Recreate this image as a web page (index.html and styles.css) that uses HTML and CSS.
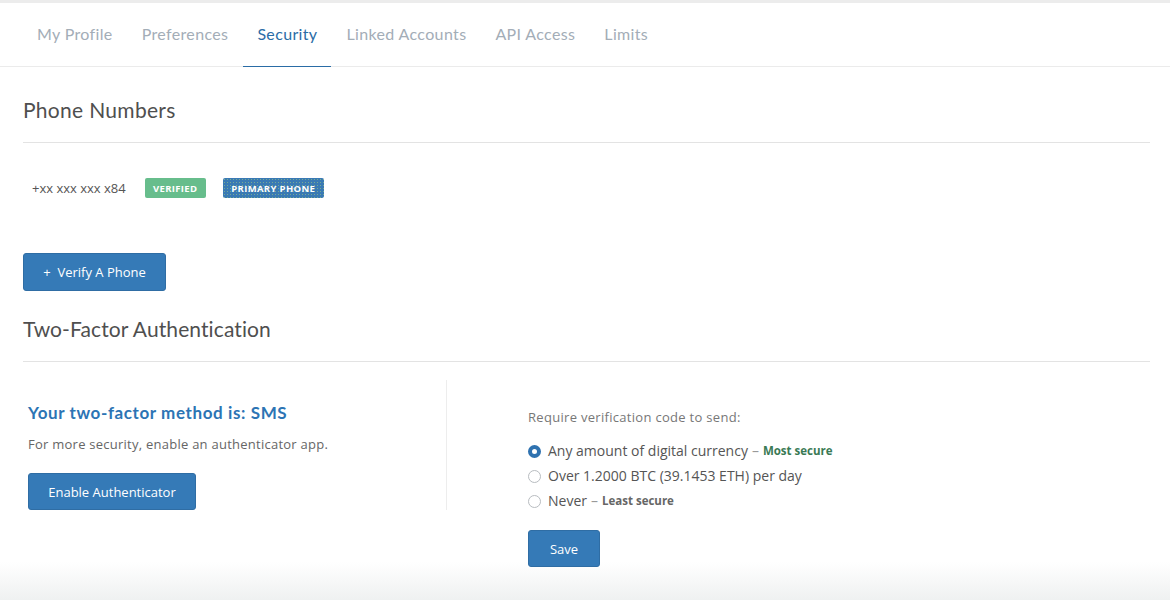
FILE: index.html
```html
<!DOCTYPE html>
<html>
<head>
<meta charset="utf-8">
<link rel="stylesheet" href="styles.css">
</head>
<body>
<div class="page">
  <nav class="tabs">
    <a class="tab">My Profile</a>
    <a class="tab">Preferences</a>
    <a class="tab active">Security</a>
    <a class="tab">Linked Accounts</a>
    <a class="tab">API Access</a>
    <a class="tab">Limits</a>
  </nav>
  <main class="content">
    <h2 class="section-title">Phone Numbers</h2>
    <div class="phone-row">
      <span class="phone">+xx xxx xxx x84</span>
      <span class="badge badge-green">VERIFIED</span>
      <span class="badge badge-blue">PRIMARY PHONE</span>
    </div>
    <button class="btn btn-verify">+ &nbsp;Verify A Phone</button>
    <h2 class="section-title title-2fa">Two-Factor Authentication</h2>
    <div class="twofa">
      <div class="twofa-left">
        <h3 class="method">Your two-factor method is: SMS</h3>
        <p class="hint">For more security, enable an authenticator app.</p>
        <button class="btn btn-auth">Enable Authenticator</button>
      </div>
      <div class="twofa-right">
        <p class="require">Require verification code to send:</p>
        <ul class="options">
          <li class="option"><span class="radio checked"></span>Any amount of digital currency <span class="dash">–</span> <b class="tag tag-green">Most secure</b></li>
          <li class="option"><span class="radio"></span>Over 1.2000 BTC (39.1453 ETH) per day</li>
          <li class="option"><span class="radio"></span>Never <span class="dash">–</span> <b class="tag tag-grey">Least secure</b></li>
        </ul>
        <button class="btn btn-save">Save</button>
      </div>
    </div>
  </main>
  <div class="footer-shade"></div>
</div>
</body>
</html>
```
FILE: styles.css
```css
* { box-sizing: border-box; }
html, body { margin: 0; padding: 0; background: #fff; }
body {
  font-family: "Open Sans", Lato, Arial, sans-serif;
  color: #4a4a4a;
  height: 600px;
  overflow: hidden;
}
.page {
  border-top: 3px solid #ececec;
}
.tabs {
  display: flex;
  padding-left: 23px;
  height: 64px;
  border-bottom: 1px solid #ebebeb;
  font-family: Lato, "Open Sans", sans-serif;
}
.tab {
  display: flex;
  align-items: center;
  padding: 0 14px 2px;
  font-size: 16px;
  letter-spacing: 0.35px;
  color: #a3adb7;
  border-bottom: 2px solid transparent;
  margin-bottom: -1px;
}
.tab + .tab { margin-left: 1px; }
.tab.active {
  color: #2a6ca6;
  border-bottom: 1px solid #2a6ca6;
}
.content {
  padding: 0 20px 0 23px;
}
.section-title {
  margin: 0;
  padding: 31px 0 20px;
  font-family: Lato, "Open Sans", sans-serif;
  font-size: 21px;
  line-height: 24px;
  font-weight: 400;
  color: #4f4f4f;
  border-bottom: 1px solid #e3e3e3;
  letter-spacing: 0.3px;
}
.phone-row {
  display: flex;
  align-items: center;
  margin-top: 35px;
  height: 20px;
  padding-left: 9px;
}
.phone {
  font-size: 13px;
  color: #555;
  margin-right: 19px;
}
.badge {
  display: inline-flex;
  align-items: center;
  height: 20px;
  padding: 0;
  font-size: 9.5px;
  font-weight: 700;
  color: #fff;
  border-radius: 2px;
  letter-spacing: 0.35px;
}
.badge-green {
  background: #67bd8c;
  width: 61px;
  justify-content: center;
  margin-right: 17px;
}
.badge-blue {
  background-color: #3a7ab4;
  background-image: radial-gradient(rgba(170, 210, 120, 0.55) 0.6px, transparent 0.9px);
  background-size: 3px 3px;
  width: 101px;
  justify-content: center;
}
.btn {
  display: inline-flex;
  align-items: center;
  justify-content: center;
  background: #357ab7;
  color: #fff;
  border: 1px solid #2f6da4;
  border-radius: 3px;
  font-family: inherit;
  font-size: 13px;
  cursor: pointer;
  padding: 0;
}
.btn-verify {
  margin-top: 55px;
  width: 143px;
  height: 38px;
}
.title-2fa {
  padding-top: 26px;
  padding-bottom: 20px;
  letter-spacing: 0.1px;
}
.twofa {
  display: grid;
  grid-template-columns: 424px 1fr;
  margin-top: 18px;
}
.twofa-left {
  padding: 23px 0 0 5px;
  border-right: 1px solid #ededed;
  height: 130px;
}
.method {
  margin: 0;
  font-family: Lato, "Open Sans", sans-serif;
  font-size: 17px;
  line-height: 20px;
  font-weight: 700;
  color: #2c74b4;
  letter-spacing: 0.6px;
}
.hint {
  margin: 12px 0 0;
  font-size: 13px;
  line-height: 18px;
  color: #666;
  letter-spacing: 0.25px;
}
.btn-auth {
  margin-top: 20px;
  width: 168px;
  height: 37px;
  font-size: 13px;
}
.twofa-right {
  padding: 28px 0 0 81px;
}
.require {
  margin: 0;
  font-size: 13px;
  line-height: 18px;
  color: #777;
  letter-spacing: 0.3px;
}
.options {
  list-style: none;
  margin: 12px 0 0;
  padding: 0;
}
.option {
  display: flex;
  align-items: center;
  height: 25px;
  font-size: 14px;
  color: #555;
}
.radio {
  width: 13px;
  height: 13px;
  border-radius: 50%;
  border: 1px solid #b8bcc0;
  margin-right: 7px;
  flex: none;
  margin-top: 2px;
}
.radio.checked {
  border: 4px solid #2f72b0;
  background: #fff;
}
.dash {
  color: #999;
  margin: 0 4px;
}
.tag {
  font-size: 11.5px;
  font-weight: 700;
}
.tag-green { color: #3a7a55; }
.tag-grey { color: #666; }
.btn-save {
  margin-top: 17px;
  width: 72px;
  height: 37px;
  position: relative;
  z-index: 1;
}
.footer-shade {
  height: 40px;
  margin-top: -5px;
  background: linear-gradient(#fff, #eef0f0);
}
```
